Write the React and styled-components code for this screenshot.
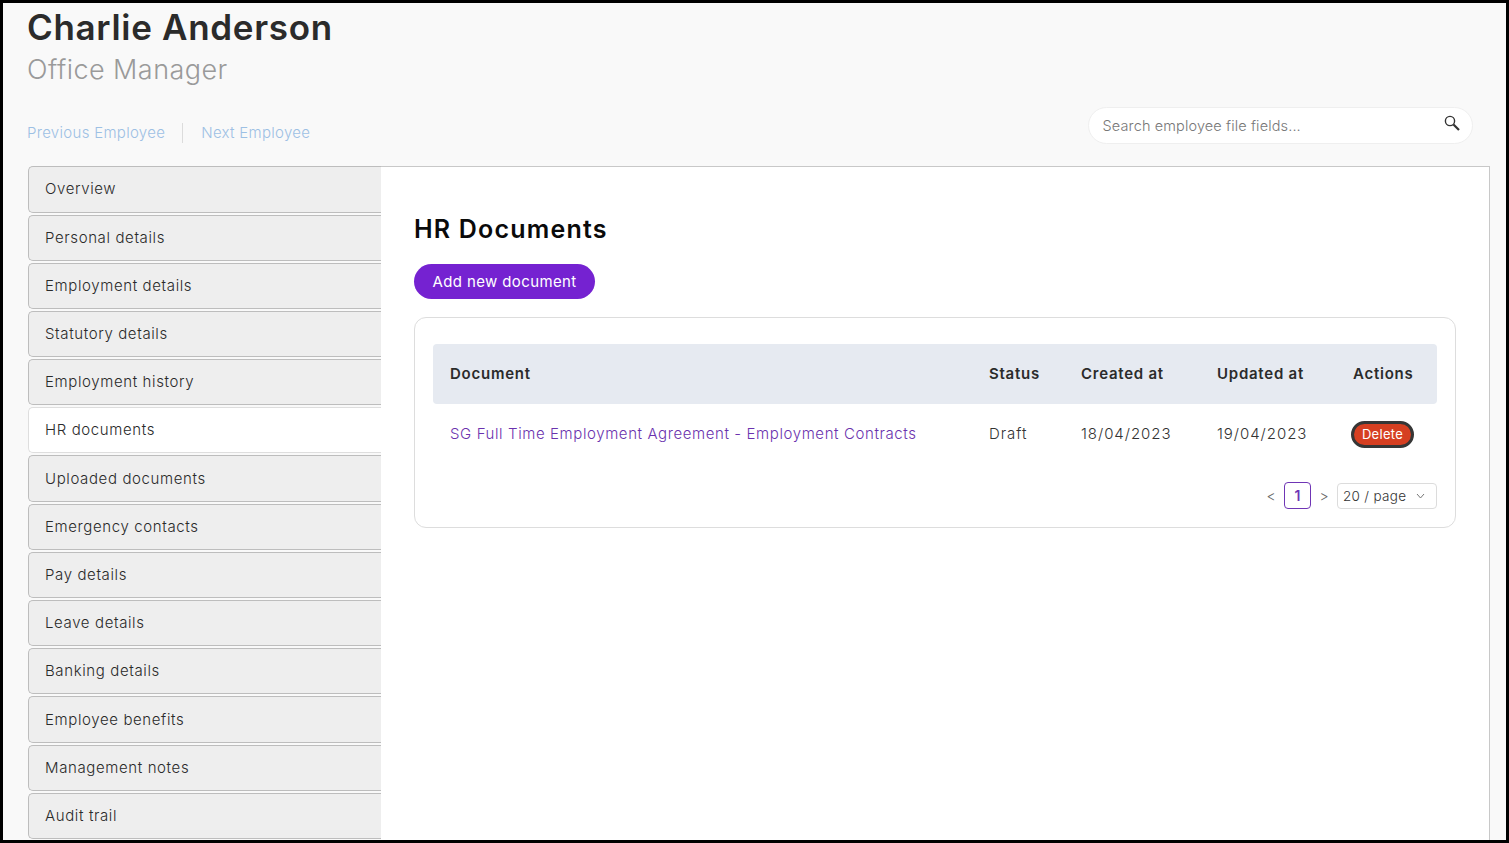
import React from "react";
import styled, { createGlobalStyle } from "styled-components";

const Global = createGlobalStyle`
  html, body { margin: 0; padding: 0; height: 100%; }
  body { font-family: Inter, "Noto Sans", "Liberation Sans", sans-serif; }
  * { box-sizing: border-box; }
`;

const Frame = styled.div`
  width: 1509px;
  height: 843px;
  border: 3px solid #000;
  background: #f9f9f9;
  overflow: hidden;
  padding: 0 16px 0 24px;
  display: flex;
  flex-direction: column;
`;

const Header = styled.header`
  height: 163px;
  flex: none;
  display: flex;
  flex-direction: column;
`;

const Name = styled.h1`
  margin: 4px 0 0;
  font-size: 35px;
  line-height: 40px;
  font-weight: 600;
  color: #2b2b2b;
  letter-spacing: 0.68px;
`;

const Role = styled.div`
  margin-top: 5px;
  font-size: 27px;
  line-height: 36px;
  font-weight: 300;
  color: #9a9a9a;
  letter-spacing: 0.45px;
`;

const HeaderRow = styled.div`
  margin-top: 22px;
  padding-right: 17px;
  display: flex;
  align-items: center;
  justify-content: space-between;
`;

const Pager = styled.div`
  display: flex;
  align-items: center;
  padding-top: 12px;
`;

const PagerLink = styled.a`
  font-size: 15px;
  line-height: 20px;
  font-weight: 300;
  color: #9dc0e4;
  letter-spacing: 0.3px;
`;

const PagerDivider = styled.span`
  width: 1px;
  height: 20px;
  margin: 0 18px 0 17px;
  background: #dcdcdc;
`;

const Search = styled.div`
  width: 385px;
  height: 37px;
  margin-top: -3px;
  background: #fff;
  border: 1px solid #efefef;
  border-radius: 19px;
  padding: 0 11px 0 13.5px;
  display: flex;
  align-items: center;
  justify-content: space-between;
`;

const Placeholder = styled.span`
  font-size: 14.5px;
  font-weight: 300;
  color: #777;
  letter-spacing: 0.13px;
`;

const SearchIcon = styled.svg`
  width: 18px;
  height: 18px;
  margin-top: -5px;
`;

const Body = styled.div`
  flex: 1;
  display: flex;
  min-height: 0;
  padding-left: 1px;
`;

const Nav = styled.nav`
  width: 353px;
  flex: none;
  padding-top: 0.35px;
  display: flex;
  flex-direction: column;
  gap: 2px;
`;

const NavItem = styled.div`
  height: 46.2px;
  flex: none;
  display: flex;
  align-items: center;
  padding: 0 0 1px 16px;
  font-size: 15px;
  font-weight: 300;
  letter-spacing: 0.62px;
  color: #2a2a2a;
  background: ${(p) => (p.$active ? "#fff" : "#eeeeee")};
  border: 1px solid ${(p) => (p.$active ? "#dedede" : "#bdbdbd")};
  border-right: none;
  border-radius: 5px 0 0 5px;
`;

const Panel = styled.main`
  flex: 1;
  background: #fff;
  border: 1px solid #c8c8c8;
  border-bottom: none;
  border-left: none;
  padding: 44px 33px 0 33px;
`;

const Title = styled.h2`
  margin: 0;
  font-size: 25px;
  line-height: 36px;
  font-weight: 600;
  color: #0a0a0a;
  letter-spacing: 1.2px;
`;

const AddButton = styled.button`
  display: block;
  margin-top: 17px;
  width: 181px;
  height: 35px;
  border: none;
  border-radius: 18px;
  background: #7522d1;
  color: #fff;
  font-family: inherit;
  font-size: 15px;
  font-weight: 400;
  letter-spacing: 0.38px;
`;

const Card = styled.section`
  margin-top: 18px;
  width: 1042px;
  height: 211px;
  border: 1px solid #dddddd;
  border-radius: 12px;
  padding: 26px 18px 0;
`;

const columns = "539px 92px 136px 136px 1fr";

const HeadRow = styled.div`
  height: 60px;
  display: grid;
  grid-template-columns: ${columns};
  align-items: center;
  background: #e6eaf1;
  border-radius: 4px;
  padding: 0 0 2px 17px;
`;

const HeadCell = styled.div`
  font-size: 15px;
  font-weight: 600;
  color: #2b2b2b;
  letter-spacing: 0.75px;
`;

const DataRow = styled.div`
  height: 60px;
  display: grid;
  grid-template-columns: ${columns};
  align-items: center;
  padding: 0 0 1px 17px;
`;

const Cell = styled.div`
  font-size: 15px;
  font-weight: 300;
  color: #333;
  letter-spacing: 0.95px;
`;

const DocLink = styled.a`
  font-size: 15px;
  font-weight: 300;
  color: #6a32ae;
  letter-spacing: 0.6px;
  white-space: nowrap;
`;

const DeleteButton = styled.button`
  display: block;
  width: 63px;
  height: 27px;
  padding: 0;
  border: 3px solid #363636;
  border-radius: 14px;
  background: #d63f21;
  color: #fff;
  font-family: inherit;
  font-size: 13px;
  font-weight: 400;
  letter-spacing: 0.3px;
  margin: 1px 0 0 -2px;
`;

const Pagination = styled.div`
  margin-top: 18px;
  display: flex;
  justify-content: flex-end;
  align-items: center;
`;

const Arrow = styled.span`
  width: 26px;
  text-align: center;
  font-size: 14px;
  font-weight: 300;
  color: #666;
`;

const PageNum = styled.span`
  width: 27px;
  height: 27px;
  display: flex;
  align-items: center;
  justify-content: center;
  border: 1px solid #6f35b5;
  border-radius: 4px;
  color: #6f35b5;
  font-size: 14px;
  font-weight: 600;
`;

const PageSize = styled.div`
  width: 100px;
  height: 26px;
  display: flex;
  align-items: center;
  justify-content: space-between;
  padding: 0 11px 0 5px;
  border: 1px solid #dcdcdc;
  border-radius: 4px;
  font-size: 13.5px;
  font-weight: 300;
  color: #333;
  letter-spacing: 0.3px;
`;

const Chevron = styled.svg`
  width: 9px;
  height: 6px;
`;

const items = [
  "Overview", "Personal details", "Employment details", "Statutory details",
  "Employment history", "HR documents", "Uploaded documents", "Emergency contacts",
  "Pay details", "Leave details", "Banking details", "Employee benefits",
  "Management notes", "Audit trail",
];

export default function App() {
  return (
    <Frame>
      <Global />
      <Header>
        <Name>Charlie Anderson</Name>
        <Role>Office Manager</Role>
        <HeaderRow>
          <Pager>
            <PagerLink>Previous Employee</PagerLink>
            <PagerDivider />
            <PagerLink>Next Employee</PagerLink>
          </Pager>
          <Search>
            <Placeholder>Search employee file fields...</Placeholder>
            <SearchIcon viewBox="0 0 18 18" fill="none" stroke="#333">
              <circle cx="7" cy="7" r="4.6" strokeWidth="1.4" />
              <path d="M10.5 10.5 L16 16" strokeWidth="2.2" />
            </SearchIcon>
          </Search>
        </HeaderRow>
      </Header>
      <Body>
        <Nav>
          {items.map((t) => (
            <NavItem key={t} $active={t === "HR documents"}>{t}</NavItem>
          ))}
        </Nav>
        <Panel>
          <Title>HR Documents</Title>
          <AddButton>Add new document</AddButton>
          <Card>
            <HeadRow>
              <HeadCell>Document</HeadCell>
              <HeadCell>Status</HeadCell>
              <HeadCell>Created at</HeadCell>
              <HeadCell>Updated at</HeadCell>
              <HeadCell>Actions</HeadCell>
            </HeadRow>
            <DataRow>
              <DocLink>SG Full Time Employment Agreement - Employment Contracts</DocLink>
              <Cell>Draft</Cell>
              <Cell>18/04/2023</Cell>
              <Cell>19/04/2023</Cell>
              <div><DeleteButton>Delete</DeleteButton></div>
            </DataRow>
            <Pagination>
              <Arrow>&lt;</Arrow>
              <PageNum>1</PageNum>
              <Arrow>&gt;</Arrow>
              <PageSize>
                20 / page
                <Chevron viewBox="0 0 9 6" fill="none" stroke="#777"><path d="M1 1l3.5 4L8 1" /></Chevron>
              </PageSize>
            </Pagination>
          </Card>
        </Panel>
      </Body>
    </Frame>
  );
}
